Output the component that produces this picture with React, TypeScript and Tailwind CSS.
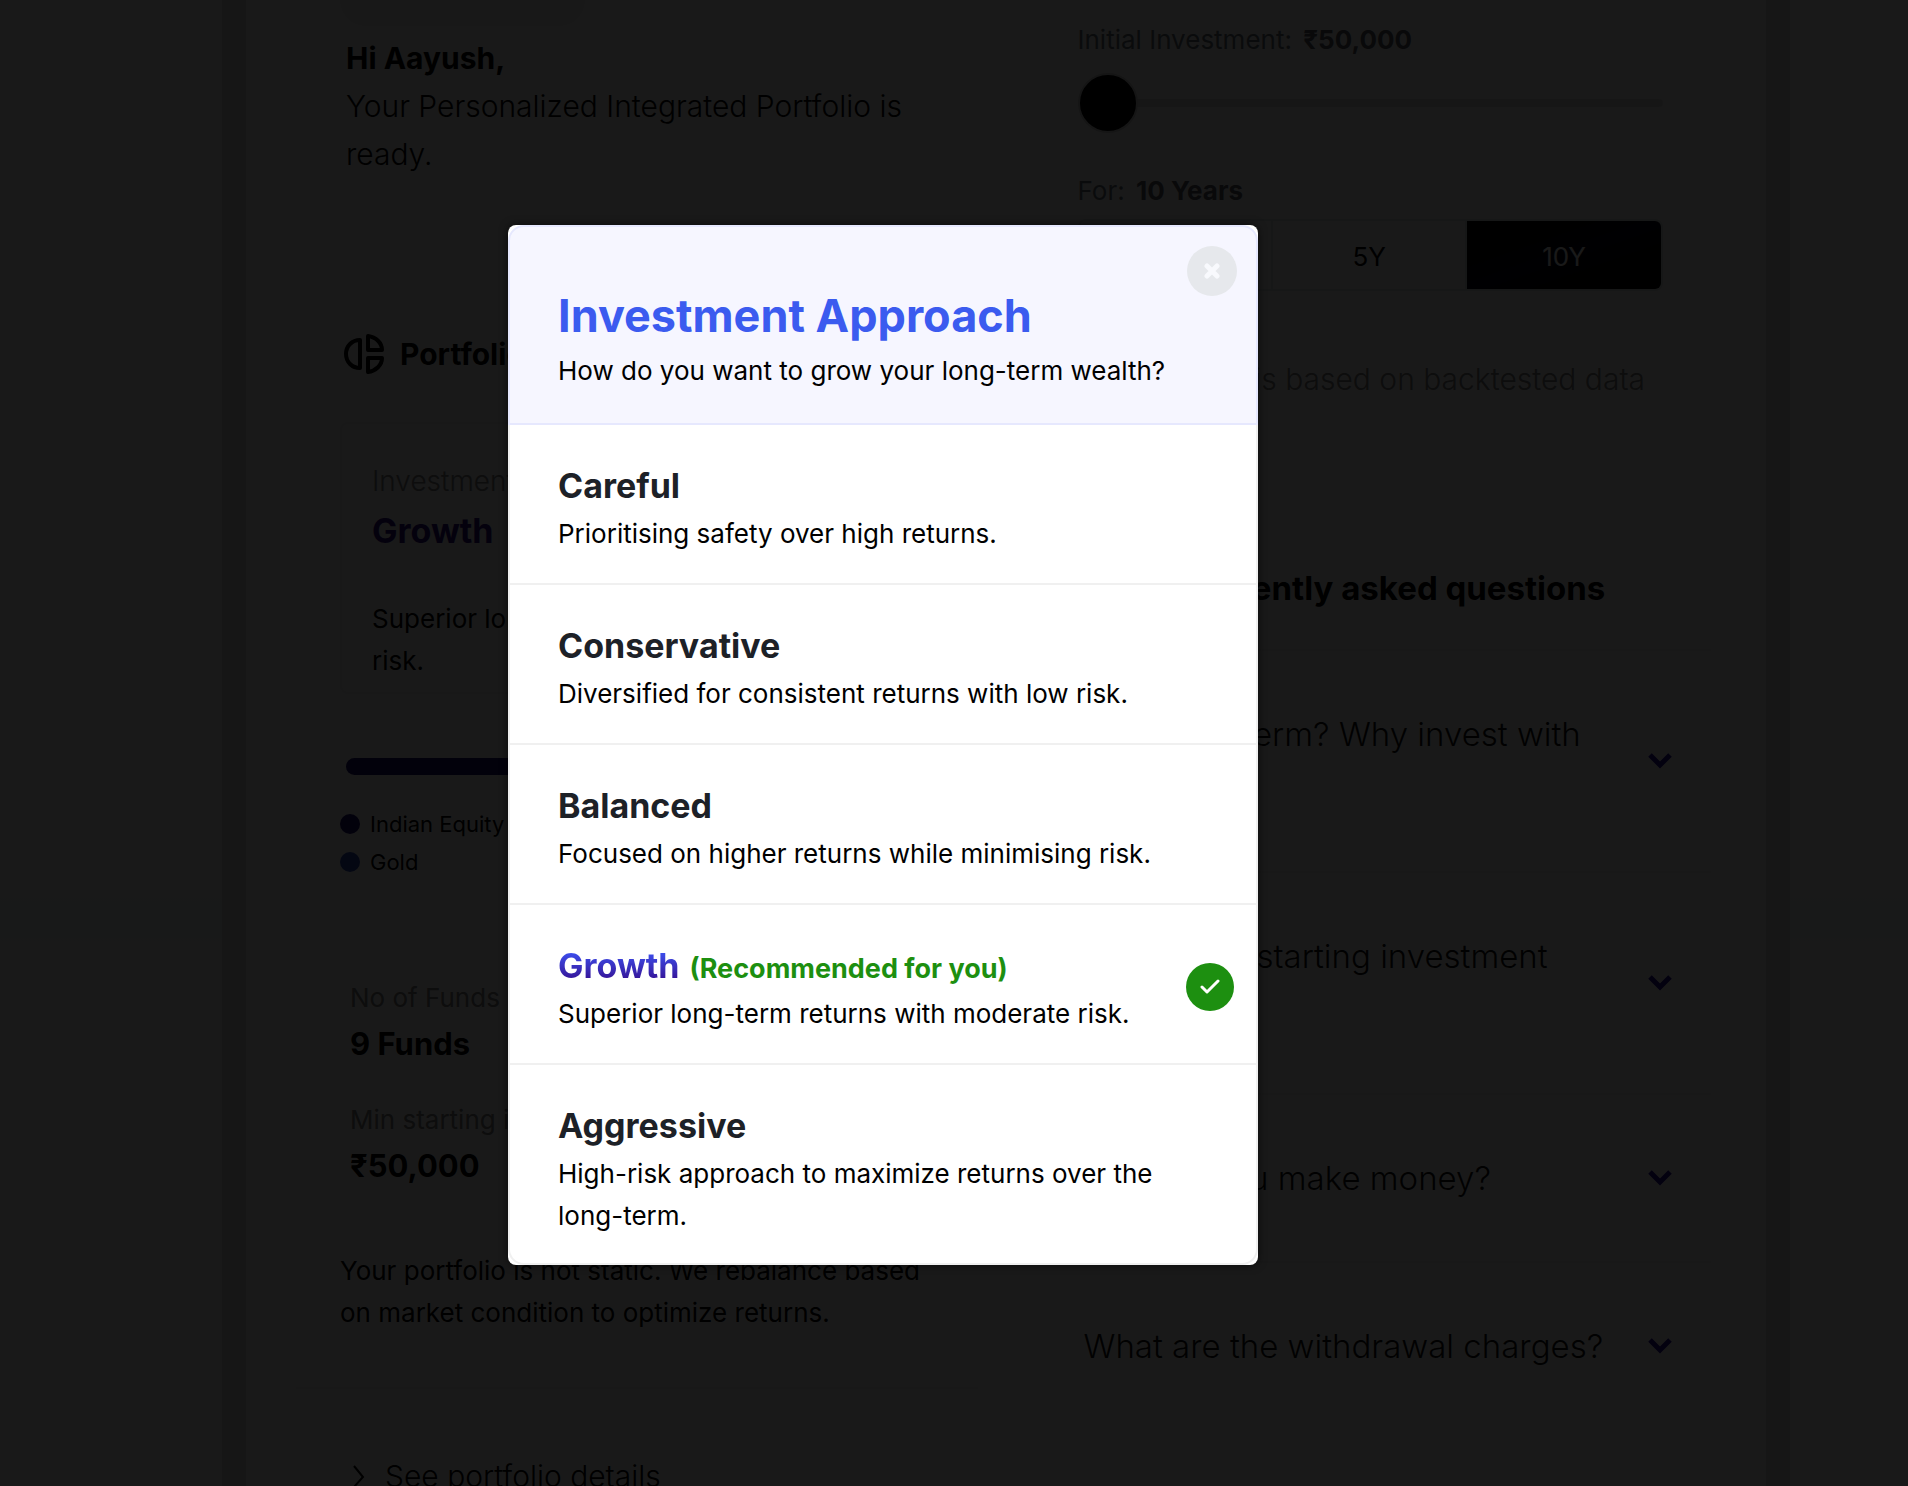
import { useState } from "react";
import { CircleHelp } from "lucide-react";

type Option = { name: string; text: string; recommended?: boolean };

const options: Option[] = [
  { name: "Careful", text: "Prioritising safety over high returns." },
  { name: "Conservative", text: "Diversified for consistent returns with low risk." },
  { name: "Balanced", text: "Focused on higher returns while minimising risk." },
  { name: "Growth", text: "Superior long-term returns with moderate risk.", recommended: true },
  { name: "Aggressive", text: "High-risk approach to maximize returns over the long-term." },
];

const questions = [
  "Why long-term? Why invest with us?",
  "What's the starting investment amount?",
  "How do you make money?",
  "What are the withdrawal charges?",
];

const periods = ["3Y", "5Y", "10Y"];

function PieIcon() {
  return (
    <svg className="ml-1" width="40" height="40" viewBox="0 0 40 40" fill="none" stroke="black" strokeWidth="4" strokeLinejoin="round" aria-hidden="true">
      <path d="M16 6V34C8 34 2 28 2 20S8 6 16 6Z" />
      <path d="M24 2C32 3 38 9 38 16H24Z" />
      <path d="M24 24H38C38 31 32 37 24 38Z" />
    </svg>
  );
}

function Chevron() {
  return (
    <svg className="shrink-0" width="24" height="16" viewBox="0 0 24 16" fill="none" stroke="#1f0c96" strokeWidth="5" aria-hidden="true">
      <path d="M2 2L12 12L22 2" />
    </svg>
  );
}

function Greeting() {
  return (
    <header>
      <div className="ml-11 h-[26px] w-[245px] rounded-b-full bg-[#f4f4f4]" />
      <div className="mt-2 pl-[50px] text-[30px] leading-[48px] text-black">
        <h1 className="font-bold">Hi Aayush,</h1>
        <p className="max-w-[580px] font-light">Your Personalized Integrated Portfolio is ready.</p>
      </div>
    </header>
  );
}

function PortfolioCard() {
  return (
    <section className="mt-[108px] rounded-t-2xl bg-white px-11 pt-[46px]">
      <div className="flex items-center gap-4">
        <PieIcon />
        <h2 className="text-[30px] leading-[44px] font-bold">Portfolio Summary</h2>
      </div>
      <div className="mt-[46px] overflow-hidden rounded-lg border-2 border-[#ededf2]">
        <div className="bg-[#f8f8fb] px-[30px] pt-[34px] pb-[22px]">
          <p className="text-[28px] leading-[46px] font-light text-[#828282]">Investment Approach</p>
          <p className="text-[34px] leading-[54px] font-bold text-[#2a0a86]">Growth</p>
        </div>
        <p className="px-[30px] pt-[18px] pb-[10px] text-[26px] leading-[42px] text-black">
          Superior long-term returns with moderate risk.
        </p>
      </div>
      <div className="mt-16 ml-1.5 flex h-[17px] overflow-hidden rounded-full">
        <div className="w-4/5 bg-[#1b0a70]" />
        <div className="flex-1 bg-[#2b49b8]" />
      </div>
      <ul className="mt-[30px] text-[22px] leading-[38px] text-black">
        <li className="flex items-center gap-2.5">
          <span className="size-5 rounded-full bg-[#1b0a70]" />
          Indian Equity
        </li>
        <li className="flex items-center gap-2.5">
          <span className="size-5 rounded-full bg-[#2b49b8]" />
          Gold
        </li>
      </ul>
      <dl className="mt-[94px] pl-2.5 leading-[46px]">
        <dt className="text-[26px] text-[#828282]">No of Funds</dt>
        <dd className="text-[31px] font-bold text-black">9 Funds</dd>
        <dt className="mt-[30px] text-[26px] text-[#828282]">Min starting investment</dt>
        <dd className="text-[31px] font-bold text-black">₹50,000</dd>
      </dl>
      <p className="mt-[61px] text-[26px] leading-[42px] text-black">
        Your portfolio is not static. We rebalance based on market condition to optimize returns.
      </p>
      <div className="-mx-11 mt-[53px] border-t-2 border-[#f0f0f0] px-14 pt-[63px] pb-12">
        <button type="button" className="flex items-center gap-5 text-[30px] leading-[48px] font-light text-black">
          <svg width="13" height="24" viewBox="0 0 13 24" fill="none" stroke="black" strokeWidth="2" aria-hidden="true">
            <path d="M2 2L11 13L2 23" />
          </svg>
          See portfolio details
        </button>
      </div>
    </section>
  );
}

function ReturnsCard() {
  const [period, setPeriod] = useState("10Y");
  const [amount, setAmount] = useState(0);
  return (
    <section className="h-[459px] rounded-b-2xl bg-white px-12 pt-4">
      <label htmlFor="amount" className="block text-[26px] leading-[48px] text-[#6c757d]">
        Initial Investment: <strong className="ml-1 font-bold text-[#5b6168]">₹50,000</strong>
      </label>
      <input
        id="amount"
        type="range"
        min={0}
        max={100}
        value={amount}
        onChange={(e) => setAmount(Number(e.target.value))}
        className="mt-[9px] block h-[60px] w-full appearance-none bg-transparent [&::-webkit-slider-runnable-track]:h-2 [&::-webkit-slider-runnable-track]:rounded-full [&::-webkit-slider-runnable-track]:bg-[#e2e2e2] [&::-webkit-slider-thumb]:-mt-[26px] [&::-webkit-slider-thumb]:size-[60px] [&::-webkit-slider-thumb]:appearance-none [&::-webkit-slider-thumb]:rounded-full [&::-webkit-slider-thumb]:border-2 [&::-webkit-slider-thumb]:border-[#d0d0d0] [&::-webkit-slider-thumb]:bg-black"
      />
      <p className="mt-[34px] text-[26px] leading-[48px] text-[#6c757d]">
        For: <strong className="ml-1 font-bold text-[#5b6168]">10 Years</strong>
      </p>
      <div className="mt-1 grid grid-cols-3 divide-x-2 divide-[#dfe3e3] overflow-hidden rounded-lg border-2 border-[#dfe3e3]">
        {periods.map((p) => (
          <button
            key={p}
            type="button"
            aria-pressed={period === p}
            onClick={() => setPeriod(p)}
            className={
              period === p
                ? "bg-linear-to-br from-black via-[#060618] to-black pt-1 text-[26px] leading-[64px] text-white"
                : "bg-white pt-1 text-[26px] leading-[64px] text-black"
            }
          >
            {p}
          </button>
        ))}
      </div>
      <p className="mt-[64px] pr-[18px] text-right text-[30px] leading-[48px] font-light text-[#828282]">
        Returns is based on backtested data
      </p>
    </section>
  );
}

function Faq() {
  return (
    <section className="mt-[52px] rounded-t-2xl bg-white">
      <h2 className="flex items-center gap-7 pt-[53px] pl-[54px] text-[33px] leading-[48px] font-bold text-black">
        <CircleHelp size={48} aria-hidden="true" />
        Frequently asked questions
      </h2>
      <ul className="mt-[37px]">
        {questions.map((q) => (
          <li key={q} className="border-t-2 border-[#f6f6f6]">
            <button type="button" className="flex w-full items-center justify-between py-14 pr-[39px] pl-[54px] text-left">
              <span className="max-w-[540px] text-[33px] leading-[54px] font-light text-[#111111]">{q}</span>
              <Chevron />
            </button>
          </li>
        ))}
      </ul>
    </section>
  );
}

function ApproachDialog() {
  const [selected, setSelected] = useState("Growth");
  return (
    <div role="dialog" aria-modal="true" aria-labelledby="approach-title" className="relative w-[750px] overflow-hidden rounded-lg bg-white shadow-[0_0_8px_rgba(0,0,0,0.6)]">
      <div className="rounded-t-2xl border-2 border-[#e6e8fe] bg-[#f6f6ff] px-12 pt-[56px] pb-[30px]">
        <h2 id="approach-title" className="text-[45px] leading-[65px] font-bold text-[#3b5bef]">
          Investment Approach
        </h2>
        <p className="text-[26px] leading-[45px] text-black">How do you want to grow your long-term wealth?</p>
      </div>
      <button type="button" aria-label="Close" className="absolute top-[21px] right-[21px] flex size-[50px] items-center justify-center rounded-full bg-[#e6e8ec]">
        <svg width="16" height="16" viewBox="0 0 16 16" stroke="#f8f9fd" strokeWidth="5" strokeLinecap="round" aria-hidden="true">
          <path d="M3 3L13 13M13 3L3 13" />
        </svg>
      </button>
      <ul className="divide-y-2 divide-[#f0f0f0] rounded-b-2xl border-2 border-t-0 border-[#f0f0f0]">
        {options.map((o) => (
          <li key={o.name} className="group">
            <button type="button" onClick={() => setSelected(o.name)} className="flex w-full items-center pt-[34px] pr-[22px] pb-7 pl-12 text-left group-last:pb-[26px]">
              <span className="flex-1">
                <span className="flex items-baseline gap-2.5">
                  <span
                    className={
                      o.recommended
                        ? "bg-linear-to-b from-[#3b53f5] from-20% to-[#330a90] to-80% bg-clip-text text-[34px] leading-[54px] font-bold text-transparent"
                        : "text-[34px] leading-[54px] font-bold text-[#1d2127]"
                    }
                  >
                    {o.name}
                  </span>
                  {o.recommended && <span className="text-[27px] font-bold text-[#1d8f10]">(Recommended for you)</span>}
                </span>
                <span className="block max-w-[620px] text-[26px] leading-[42px] text-black">{o.text}</span>
              </span>
              {selected === o.name && (
                <span className="flex size-12 items-center justify-center rounded-full bg-[#1d8f10]">
                  <svg width="20" height="16" viewBox="0 0 20 16" fill="none" stroke="white" strokeWidth="3" strokeLinecap="round" strokeLinejoin="round" aria-hidden="true">
                    <path d="M2 8L7 13L18 2" />
                  </svg>
                </span>
              )}
            </button>
          </li>
        ))}
      </ul>
    </div>
  );
}

export default function App() {
  return (
    <div className="relative h-screen overflow-hidden bg-linear-to-b from-white from-57% via-[#f3fbf8] via-62% to-white to-66% font-[Inter,sans-serif]">
      <main className="mr-[118px] ml-[222px] border-x-24 border-[#dcdcdc] bg-[#fafafa] pr-[55px] pl-[50px]">
        <div className="grid grid-cols-2 items-start gap-[52px]">
          <div>
            <Greeting />
            <PortfolioCard />
          </div>
          <div>
            <ReturnsCard />
            <Faq />
          </div>
        </div>
      </main>
      <div className="absolute inset-0 flex items-center justify-center bg-black/90 pt-1 pr-[142px]">
        <ApproachDialog />
      </div>
    </div>
  );
}
